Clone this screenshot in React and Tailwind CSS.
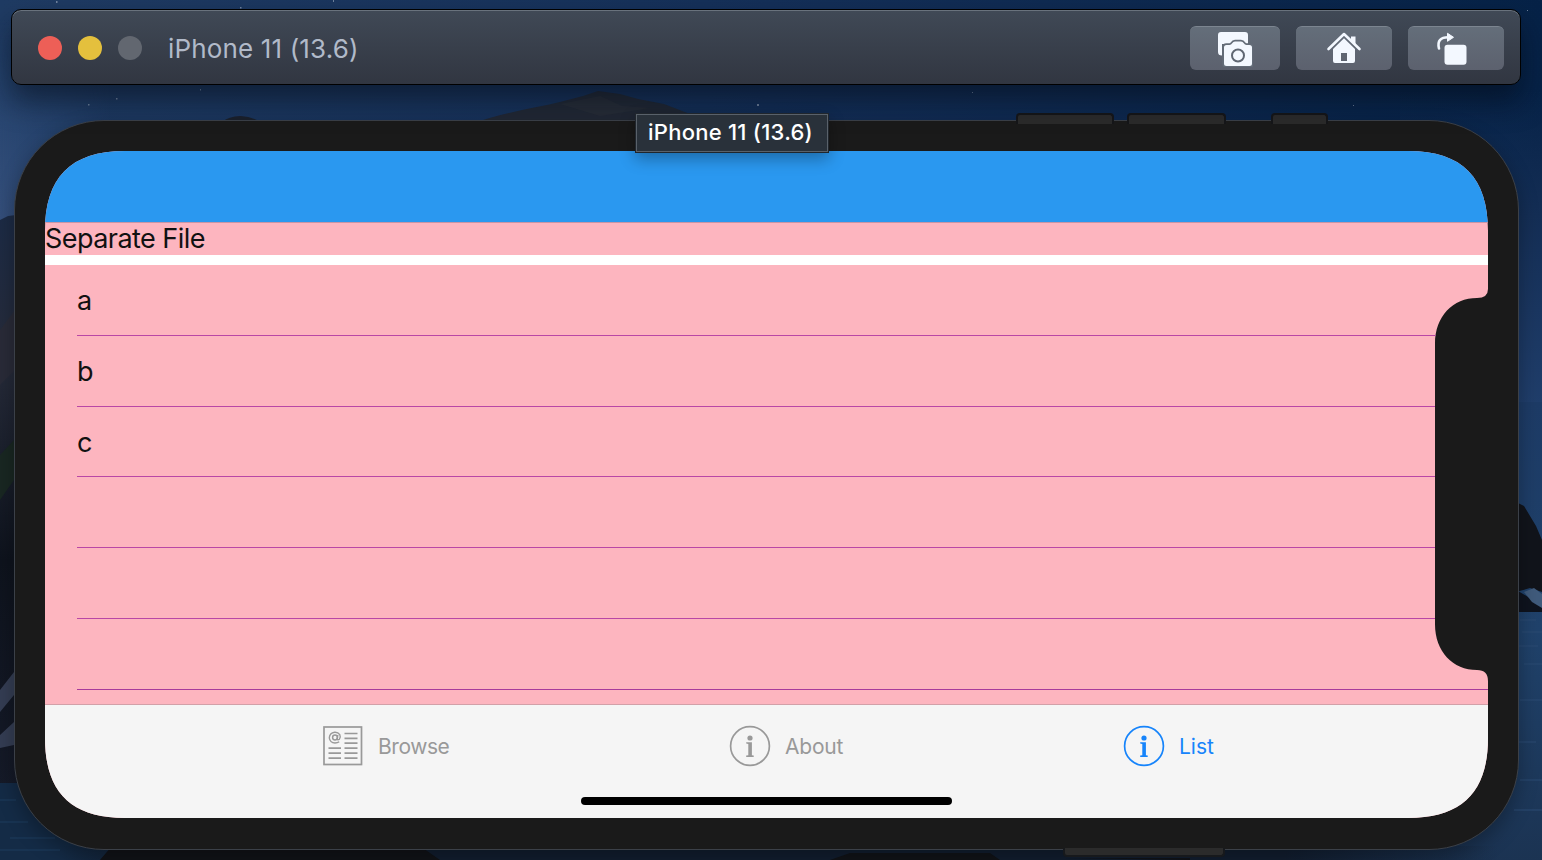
import React from "react";

function Wallpaper() {
  return (
    <svg className="absolute inset-0 h-full w-full" viewBox="0 0 1542 860" preserveAspectRatio="none" aria-hidden="true">
      <defs>
        <linearGradient id="sky" x1="0" y1="0" x2="1" y2="0">
          <stop offset="0" stopColor="#1f3b63" />
          <stop offset="0.5" stopColor="#142f58" />
          <stop offset="1" stopColor="#062247" />
        </linearGradient>
        <linearGradient id="haze" x1="0" y1="0" x2="0" y2="1">
          <stop offset="0" stopColor="#26446f" stopOpacity="0" />
          <stop offset="0.5" stopColor="#2a4772" />
          <stop offset="1" stopColor="#36507c" />
        </linearGradient>
        <linearGradient id="hazeFade" x1="0" y1="0" x2="1" y2="0">
          <stop offset="0" stopColor="#fff" />
          <stop offset="1" stopColor="#000" />
        </linearGradient>
        <mask id="hazeMask"><rect y="20" width="110" height="210" fill="url(#hazeFade)" /></mask>
        <linearGradient id="right" x1="0" y1="0" x2="0" y2="1">
          <stop offset="0" stopColor="#142e55" stopOpacity="0" />
          <stop offset="0.4" stopColor="#142e55" />
          <stop offset="1" stopColor="#203e6b" />
        </linearGradient>
        <linearGradient id="cliff" x1="0" y1="0" x2="0" y2="1">
          <stop offset="0" stopColor="#1c2b45" />
          <stop offset="0.25" stopColor="#262b3a" />
          <stop offset="0.6" stopColor="#0e131d" />
          <stop offset="1" stopColor="#151a28" />
        </linearGradient>
        <linearGradient id="sea" x1="0" y1="0" x2="0" y2="1">
          <stop offset="0" stopColor="#1d3b66" />
          <stop offset="0.5" stopColor="#20426b" />
          <stop offset="1" stopColor="#1b3352" />
        </linearGradient>
        <linearGradient id="shore" x1="0" y1="0" x2="1" y2="0">
          <stop offset="0" stopColor="#142b46" />
          <stop offset="0.08" stopColor="#121e30" />
          <stop offset="0.85" stopColor="#121e30" />
          <stop offset="1" stopColor="#121e30" stopOpacity="0" />
        </linearGradient>
      </defs>
      <rect width="1542" height="860" fill="url(#sky)" />
      <rect y="20" width="110" height="210" fill="url(#haze)" mask="url(#hazeMask)" />
      <rect x="1400" y="90" width="142" height="314" fill="url(#right)" />
      <path d="M0 220 L8 216 L16 215 L60 250 V790 H0Z" fill="url(#cliff)" />
      <path d="M0 330 L15 310 V370 L0 385Z" fill="#292b38" />
      <path d="M0 455 L14 440 V480 L0 500Z" fill="#192722" />
      <path d="M0 690 L14 672 V695 L0 712Z M0 735 L14 722 V745 L0 748Z" fill="#343d53" />
      <path d="M0 783 H70 L200 860 H0Z" fill="#142b46" />
      <path d="M0 800 H16 M0 822 H28 M10 838 H55 M0 850 H70" stroke="#1d3c5c" strokeWidth="1" />
      <rect x="1300" y="402" width="242" height="460" fill="url(#sea)" />
      <rect x="60" y="846" width="1440" height="14" fill="url(#shore)" />
      <path d="M1516 502 L1524 506 L1536 526 L1542 540 V592 L1530 588 L1516 592Z" fill="#11141b" />
      <path d="M1518 591 L1542 605 V612 L1518 612Z" fill="#0e131e" />
      <path d="M1524 592 L1534 588 L1542 594 V608 L1532 602Z" fill="#405b7c" />
      <path d="M1520 620 H1536 M1522 632 H1542 M1519 646 H1538 M1524 664 H1542 M1520 700 H1542 M1519 742 H1536 M1520 780 H1542 M1514 810 H1542" stroke="#2a4b73" strokeWidth="1" />
      <path d="M218 124 Q240 108 264 124Z" fill="#1c222e" />
      <path d="M470 124 C505 112 535 108 560 102 L583 96 L598 91 L620 94 L638 99 L664 104 L690 114 L705 124Z" fill="#222936" />
      <path d="M560 104 L600 96 L622 106 L650 108 L600 116Z" fill="#2b303b" opacity=".6" />
      <path d="M100 860 L112 846 H420 L440 860Z M830 860 L850 853 H990 L1000 860Z M1065 858 H1190 V860Z" fill="#111318" />
      <g fill="#8b9bb2" opacity=".75">
        <rect x="56" y="1" width="1.5" height="2" /><rect x="240" y="7" width="1.5" height="1.5" />
        <rect x="333" y="0" width="1" height="2" /><rect x="116" y="98" width="1.5" height="1.5" />
        <rect x="88" y="104" width="1.5" height="1.5" /><rect x="200" y="89" width="1" height="1.5" />
        <rect x="757" y="104" width="2" height="2" /><rect x="972" y="92" width="1" height="1" />
        <rect x="1527" y="10" width="1" height="1" /><rect x="1353" y="105" width="1" height="1" />
      </g>
    </svg>
  );
}

function CameraIcon() {
  return (
    <svg width="36" height="36" viewBox="0 0 36 36" fill="#f3f8ff">
      <path d="M4 1 H28 Q31 1 31 4 V13 H5 V24.5 Q1 24.5 1 21 V4 Q1 1 4 1Z" />
      <path d="M9.5 14 H12.5 Q14.2 14 15.2 12.3 Q16.2 10.6 18 10.6 H24 Q25.8 10.6 26.8 12.3 Q27.8 14 29.5 14 H32.5 Q35 14 35 16.5 V32.5 Q35 35 32.5 35 H9.5 Q7 35 7 32.5 V16.5 Q7 14 9.5 14Z" stroke="#636c78" strokeWidth="3.6" style={{ paintOrder: "stroke" }} />
      <circle cx="21" cy="24.5" r="6" fill="none" stroke="#5f6773" strokeWidth="2" />
    </svg>
  );
}

function HomeIcon() {
  return (
    <svg width="36" height="36" viewBox="0 0 36 36" fill="none">
      <path d="M2.5 18 L18 3 L33.5 18" stroke="#f3f8ff" strokeWidth="2.6" strokeLinecap="round" strokeLinejoin="round" />
      <path d="M25 5.5 H29.5 V13.5 L25 9Z" fill="#f3f8ff" />
      <path fillRule="evenodd" d="M18 7.3 L29 18 V30 Q29 32 27 32 H9 Q7 32 7 30 V18Z M15 22 V30 H21 V22Z" fill="#f3f8ff" />
    </svg>
  );
}

function RotateIcon() {
  return (
    <svg width="32" height="36" viewBox="0 0 32 36" fill="none">
      <path d="M3 17.5 C1 9.5 5 6.3 12 6.3" stroke="#f3f8ff" strokeWidth="2.6" strokeLinecap="round" />
      <path d="M11.5 2.3 L17.5 6.3 L11.5 10.3Z" fill="#f3f8ff" stroke="#f3f8ff" strokeLinejoin="round" />
      <rect x="8.5" y="13.8" width="22" height="20" rx="3" fill="#f3f8ff" />
    </svg>
  );
}

function ToolButton({ label, className, children }) {
  return (
    <button aria-label={label} className={`flex h-11 items-center justify-center rounded-[6px] border-t border-[#7c8590] bg-linear-to-b from-[#646e7a] to-[#5c616e] ${className}`}>
      {children}
    </button>
  );
}

function NewsIcon() {
  return (
    <svg width="40" height="40" viewBox="0 0 40 40" fill="none" stroke="#999">
      <rect x="1" y="1" width="37.5" height="37.5" strokeWidth="1.7" />
      <path d="M21.5 7.5 H34.5 M21.5 12.3 H34.5 M21.5 17.2 H34.5 M5.5 22.2 H18 M21.5 22.2 H34.5 M5.5 27.2 H18 M21.5 27.2 H34.5 M5.5 32.1 H18 M21.5 32.1 H34.5" strokeWidth="1.7" />
      <circle cx="12" cy="11.5" r="2.4" strokeWidth="1.5" />
      <path d="M14.8 9 L14.2 13 Q14.7 14.5 16.4 13.2 Q18 11 16.8 8.7 Q15 6 11.7 6.2 Q6.5 6.8 6.3 12 Q7 16.8 12 17 Q14.5 17 16.2 15.7" strokeWidth="1.4" />
    </svg>
  );
}

function InfoIcon() {
  return (
    <svg width="42" height="42" viewBox="0 0 42 42" fill="none">
      <circle cx="21" cy="21" r="19.4" stroke="currentColor" strokeWidth="1.7" />
      <circle cx="21" cy="13" r="2.6" fill="currentColor" />
      <path d="M17.2 17.2 H22.9 V30.2 L24.7 30.6 V31.9 H17.2 V30.6 L19.3 30.2 V18.9 L17.2 18.5Z" fill="currentColor" />
    </svg>
  );
}

function Tab({ icon, label, className }) {
  return (
    <div className={`flex h-[42px] items-center ${className}`}>
      {icon}
      <span className="pt-px whitespace-nowrap">{label}</span>
    </div>
  );
}

const rows = ["a", "b", "c", "", ""];

export default function App() {
  return (
    <main className="relative h-[860px] w-[1542px] overflow-hidden font-['Inter','Liberation_Sans',sans-serif]">
      <Wallpaper />
      <div className="relative flex flex-col pt-[9px]">
        <header className="relative z-10 ml-[11px] flex h-[76px] w-[1510px] items-center rounded-[10px] border border-black bg-linear-to-b from-[#404956] to-[#313641] pt-0.5 pr-4 pl-[26px] shadow-[0_16px_28px_rgba(3,10,20,0.5),inset_0_1px_0_#69727d]">
          <div className="flex gap-4">
            <span className="size-6 rounded-full bg-[#ed5f57]" />
            <span className="size-6 rounded-full bg-[#e4c03d]" />
            <span className="size-6 rounded-full bg-[#626770]" />
          </div>
          <h1 className="ml-[26px] pt-0.5 text-[26px] leading-8 tracking-[0.15px] whitespace-nowrap text-[#b1bac9]">iPhone 11 (13.6)</h1>
          <div className="ml-auto flex gap-4">
            <ToolButton label="Screenshot" className="w-[90px]"><CameraIcon /></ToolButton>
            <ToolButton label="Home" className="w-24"><HomeIcon /></ToolButton>
            <ToolButton label="Rotate" className="w-24 pr-[8px]"><RotateIcon /></ToolButton>
          </div>
        </header>

        <section className="relative mt-[35px] ml-[14px] h-[730px] w-[1505px] rounded-[90px] border-[1.5px] border-[#3b4048] bg-[#1a1a1a] shadow-[0_8px_20px_rgba(0,0,0,0.3)]">
          <i className="absolute -top-2 left-[1001px] h-[11px] w-[98px] rounded-t-[4px] border-2 border-b-0 border-[#151619] bg-[#2b2b2b]" />
          <i className="absolute -top-2 left-[1112px] h-[11px] w-[99px] rounded-t-[4px] border-2 border-b-0 border-[#151619] bg-[#2b2b2b]" />
          <i className="absolute -top-2 left-[1256px] h-[11px] w-[57px] rounded-t-[4px] border-2 border-b-0 border-[#151619] bg-[#2b2b2b]" />
          <i className="absolute top-[727px] left-[1048px] h-[9px] w-[162px] rounded-b-[4px] border-2 border-t-0 border-[#17191c] bg-[#2b2b2b]" />

          <div className="mt-[30px] ml-[30px] flex h-[667px] w-[1443px] flex-col bg-[#fdb5bf] [clip-path:path('M80_0H1363C1418_0_1443_27_1443_80V138Q1443_147_1432_147C1408_147_1390_165_1390_193V473C1390_501_1408_519_1432_519Q1443_519_1443_530V587C1443_640_1418_667_1363_667H80C25_667_0_640_0_587V80C0_27_25_0_80_0Z')]">
            <div className="h-[71px] shrink-0 bg-[#2a98f0]" />
            <div className="h-[33px] shrink-0 border-t border-[#c995a5] text-[27px] leading-8 text-[#111]"><span className="tracking-[-0.55px]">Separate File</span></div>
            <div className="h-[10px] shrink-0 bg-white" />
            <div className="h-[439px] shrink-0 overflow-hidden pl-8">
              {rows.map((row, i) => (
                <div key={i} className="flex h-[70.8px] items-center border-b border-[#b947a6] pt-[3px] text-[27px] text-[#111]">{row}</div>
              ))}
              <div className="h-[71px] border-b border-[#a83a9b]" />
            </div>
            <nav className="flex flex-1 flex-col border-t border-[#d2a0a8] bg-[#f5f5f5] text-[21px] text-[#999]">
              <div className="flex pt-5">
                <Tab icon={<NewsIcon />} label="Browse" className="ml-[278px] w-[406px] gap-[15px] tracking-[-0.45px]" />
                <Tab icon={<InfoIcon />} label="About" className="w-[394px] gap-[14px] tracking-[-0.2px]" />
                <Tab icon={<InfoIcon />} label="List" className="gap-[14px] text-[#1684fb]" />
              </div>
              <div className="mt-[30px] ml-[536px] h-2 w-[371px] rounded-full bg-black" />
            </nav>
          </div>
        </section>
      </div>
      <div role="tooltip" className="absolute top-[113px] left-[635px] z-20 flex h-10 w-[194px] items-center justify-center border border-[#20262d] bg-[#29313a] pr-[3px] pb-0.5 text-[22px] font-medium whitespace-nowrap text-white shadow-[0_6px_16px_rgba(0,0,0,0.3),inset_0_0_0_1px_#59616a]">
        <span className="tracking-[0.25px]">iPhone 11 (13.6)</span>
      </div>
    </main>
  );
}
